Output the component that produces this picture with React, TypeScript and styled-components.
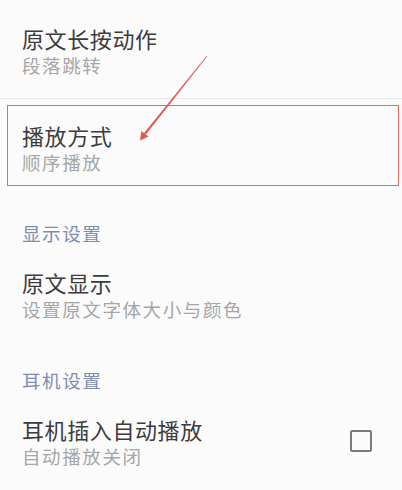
import * as React from 'react';
import styled, { createGlobalStyle } from 'styled-components';

const GlobalStyle = createGlobalStyle`
  html, body {
    margin: 0;
    padding: 0;
    background: #fbfbfb;
  }
  body {
    font-family: "Noto Sans CJK SC", "Noto Sans", sans-serif;
  }
`;

const Page = styled.div`
  position: relative;
  width: 402px;
  height: 490px;
  overflow: hidden;
  background: #fbfbfb;
`;

const Item = styled.div<{ $top: number; $bottom: number; $divider?: boolean }>`
  position: relative;
  display: flex;
  align-items: center;
  justify-content: space-between;
  padding: ${(p) => p.$top}px 22px ${(p) => p.$bottom}px 22px;
  border-bottom: ${(p) => (p.$divider ? '1px solid #e6e6e6' : 'none')};
`;

const Texts = styled.div`
  display: flex;
  flex-direction: column;
  gap: 1px;
`;

const Title = styled.div`
  font-size: 22px;
  line-height: 28px;
  letter-spacing: 0.6px;
  color: #3c3c3c;
`;

const Summary = styled.div`
  font-size: 18.5px;
  line-height: 24px;
  letter-spacing: 1.6px;
  color: #a6a6a6;
`;

const Header = styled.div<{ $top: number }>`
  padding: ${(p) => p.$top}px 22px 0 22px;
  font-size: 18.5px;
  line-height: 24px;
  letter-spacing: 1.6px;
  color: #7d8db0;
`;

const Highlight = styled.div`
  position: absolute;
  left: 7px;
  right: 3px;
  top: 6px;
  bottom: 8px;
  border: 1px solid #e06a66;
  pointer-events: none;
`;

const Checkbox = styled.div`
  width: 18px;
  height: 18px;
  margin-right: 8px;
  margin-top: -2px;
  border: 2.5px solid #7a7a7a;
  border-radius: 2px;
`;

const Overlay = styled.svg`
  position: absolute;
  left: 0;
  top: 0;
  pointer-events: none;
`;

export default function App() {
  return (
    <Page>
      <GlobalStyle />
      <Item $top={24} $bottom={21} $divider>
        <Texts>
          <Title>原文长按动作</Title>
          <Summary>段落跳转</Summary>
        </Texts>
      </Item>
      <Item $top={22} $bottom={20}>
        <Highlight />
        <Texts>
          <Title>播放方式</Title>
          <Summary>顺序播放</Summary>
        </Texts>
      </Item>
      <Header $top={27}>显示设置</Header>
      <Item $top={23} $bottom={20}>
        <Texts>
          <Title>原文显示</Title>
          <Summary>设置原文字体大小与颜色</Summary>
        </Texts>
      </Item>
      <Header $top={27}>耳机设置</Header>
      <Item $top={23} $bottom={20}>
        <Texts>
          <Title>耳机插入自动播放</Title>
          <Summary>自动播放关闭</Summary>
        </Texts>
        <Checkbox />
      </Item>
      <Overlay width="402" height="490" viewBox="0 0 402 490">
        <path
          d="M206.7 55.7 L207.3 56.3 L145.9 134.5 L144.1 133.0 Z"
          fill="#dd5a55"
        />
        <path d="M140 140.5 L148.6 136.6 L141.4 130.9 Z" fill="#dd5a55" />
      </Overlay>
    </Page>
  );
}
